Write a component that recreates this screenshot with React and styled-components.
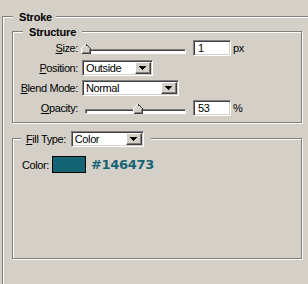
import styled, { createGlobalStyle } from "styled-components";

const GlobalStyle = createGlobalStyle`
  html, body {
    margin: 0;
    padding: 0;
    background: #d4d0c8;
    overflow: hidden;
  }
  body {
    font-family: "Liberation Sans", Arial, sans-serif;
    font-size: 11px;
    letter-spacing: -0.4px;
    color: #000;
  }
`;

const Page = styled.div`
  width: 308px;
  height: 284px;
  overflow: hidden;
  box-sizing: border-box;
  padding: 16px 0 0 2px;
`;

const Group = styled.div`
  position: relative;
  box-sizing: border-box;
  border: 1px solid #808080;
  box-shadow: inset 1px 1px 0 #fff, 1px 1px 0 #fff;
`;

const Outer = styled(Group)`
  width: 330px;
  height: 300px;
  padding: 14px 0 0 9px;
`;

const Panel = styled(Group)`
  width: 290px;
  height: ${(p) => p.$h}px;
  padding: ${(p) => p.$pad};
  & + & {
    margin-top: 15px;
  }
`;

const Legend = styled.div`
  position: absolute;
  top: -6px;
  left: 10px;
  padding: 0 ${(p) => p.$right || 6}px 0 6px;
  background: #d4d0c8;
  font-weight: bold;
  line-height: 13px;
  letter-spacing: -0.2px;
`;

const FillLegend = styled.div`
  position: absolute;
  top: -8px;
  left: 8px;
  padding: 0 7px 0 5px;
  background: #d4d0c8;
  display: flex;
  align-items: center;
  gap: 5px;
`;

const Rows = styled.div`
  display: grid;
  grid-template-columns: 65px 1fr;
  grid-auto-rows: 20px;
  column-gap: 4px;
  align-items: center;
`;

const Label = styled.div`
  text-align: right;
  white-space: nowrap;
`;

const Control = styled.div`
  display: flex;
  align-items: center;
`;

const Sunken = styled.div`
  box-sizing: border-box;
  height: 16px;
  background: #fff;
  border: 1px solid;
  border-color: #808080 #fff #fff #808080;
  box-shadow: inset 1px 1px 0 #404040, inset -1px -1px 0 #d4d0c8;
  padding: 1px;
`;

const SelectBox = styled(Sunken)`
  width: ${(p) => p.$w}px;
  display: flex;
`;

const SelectText = styled.div`
  flex: 1;
  padding-left: 2px;
  line-height: 12px;
  white-space: nowrap;
`;

const ArrowButton = styled.div`
  width: 16px;
  height: 12px;
  box-sizing: border-box;
  background: #d4d0c8;
  border: 1px solid;
  border-color: #fff #404040 #404040 #fff;
  box-shadow: inset -1px -1px 0 #808080;
  display: flex;
  align-items: center;
  justify-content: center;
  padding: 0 1px 1px 0;
`;

const NumberBox = styled(Sunken)`
  width: 38px;
  margin-left: 7px;
  padding-left: 4px;
  line-height: 12px;
`;

const Unit = styled.span`
  margin-left: 2px;
`;

const Slider = styled.div`
  position: relative;
  width: 105px;
  height: 10px;
  margin-left: -1px;
  margin-top: 2px;
`;

const Track = styled.div`
  position: absolute;
  left: 4px;
  right: 0;
  bottom: 0;
  height: 5px;
  box-sizing: border-box;
  background: #fff;
  border: 1px solid;
  border-color: #808080 #fff #fff #808080;
  box-shadow: inset 1px 1px 0 #404040;
`;

const Thumb = styled.svg`
  position: absolute;
  top: 0;
  display: block;
`;

const ColorRow = styled.div`
  display: flex;
  align-items: center;
  height: 17px;
`;

const Swatch = styled.div`
  width: 34px;
  height: 17px;
  box-sizing: border-box;
  margin-left: 3px;
  border: 1px solid #000;
  background: ${(p) => p.$color};
`;

const Hex = styled.span`
  margin-left: 5px;
  font-family: "DejaVu Sans", Verdana, sans-serif;
  font-weight: bold;
  font-size: 13px;
  letter-spacing: -0.3px;
  color: ${(p) => p.$color};
`;

function Arrow() {
  return (
    <svg width="7" height="4" viewBox="0 0 7 4" shapeRendering="crispEdges">
      <path d="M0 0h7v1H0zM1 1h5v1H1zM2 2h3v1H2zM3 3h1v1H3z" fill="#000" />
    </svg>
  );
}

function Select({ width, value }) {
  return (
    <SelectBox $w={width}>
      <SelectText>{value}</SelectText>
      <ArrowButton>
        <Arrow />
      </ArrowButton>
    </SelectBox>
  );
}

function Range({ value }) {
  return (
    <Slider>
      <Track />
      <Thumb
        width="10"
        height="10"
        viewBox="0 0 10 10"
        shapeRendering="crispEdges"
        style={{ left: value - 1 }}
      >
        <path d="M1 9V4.5L5 0.5L9 4.5V9Z" fill="#d4d0c8" />
        <path d="M0.5 9V4.5L4.5 0.5" fill="none" stroke="#fff" />
        <path d="M5 0.5L9.5 4.5V9.5H0.5" fill="none" stroke="#404040" />
        <path d="M8.5 5V8.5H1.5" fill="none" stroke="#808080" />
      </Thumb>
    </Slider>
  );
}

export default function App() {
  const color = "#146473";
  return (
    <>
      <GlobalStyle />
      <Page>
        <Outer>
          <Legend $right={4}>Stroke</Legend>
          <Panel $h={92} $pad="6px 0 0 0">
            <Legend>Structure</Legend>
            <Rows>
              <Label>
                <u>S</u>ize:
              </Label>
              <Control>
                <Range value={1} />
                <NumberBox>1</NumberBox>
                <Unit>px</Unit>
              </Control>
              <Label>
                <u>P</u>osition:
              </Label>
              <Control>
                <Select width={71} value="Outside" />
              </Control>
              <Label>
                <u>B</u>lend Mode:
              </Label>
              <Control>
                <Select width={97} value="Normal" />
              </Control>
              <Label>
                <u>O</u>pacity:
              </Label>
              <Control>
                <Range value={53} />
                <NumberBox>53</NumberBox>
                <Unit>%</Unit>
              </Control>
            </Rows>
          </Panel>
          <Panel $h={121} $pad="17px 0 0 9px">
            <FillLegend>
              <span>
                <u>F</u>ill Type:
              </span>
              <Select width={73} value="Color" />
            </FillLegend>
            <ColorRow>
              <span>Color:</span>
              <Swatch $color={color} />
              <Hex $color={color}>#146473</Hex>
            </ColorRow>
          </Panel>
        </Outer>
      </Page>
    </>
  );
}
